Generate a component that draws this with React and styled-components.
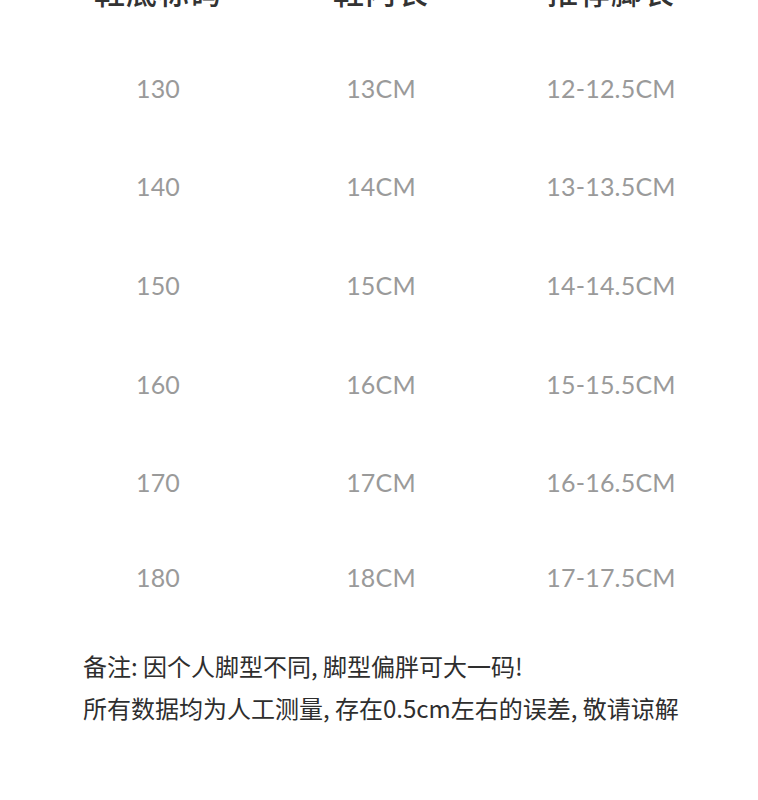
import React from "react";
import styled, { createGlobalStyle } from "styled-components";

const Global = createGlobalStyle`
  html, body { margin: 0; padding: 0; background: #fff; }
  body { width: 758px; height: 800px; overflow: hidden; }
`;

const Page = styled.div`
  width: 758px;
  height: 800px;
  overflow: hidden;
  background: #fff;
  font-family: "Noto Sans CJK SC", "Noto Sans", sans-serif;
`;

const Grid = styled.div`
  display: grid;
  grid-template-columns: 220px 226px 234px;
  padding-left: 48px;
`;

const HeadCell = styled.div`
  height: 60px;
  margin-top: -40px;
  margin-bottom: 19px;
  display: flex;
  align-items: center;
  justify-content: center;
  font-size: 31px;
  font-weight: 500;
  color: #333;
  letter-spacing: 1px;
`;

const Cell = styled.div`
  height: ${(p) => p.$h}px;
  display: flex;
  align-items: center;
  justify-content: center;
  font-family: "Lato", "Noto Sans", sans-serif;
  font-size: 25px;
  color: #9a9a9a;
  letter-spacing: 0.2px;
`;

const Notes = styled.div`
  padding: 21px 0 0 83px;
  font-size: 24px;
  line-height: 42px;
  color: #2e2e2e;
`;

const rows = [
  ["130", "13CM", "12-12.5CM"],
  ["140", "14CM", "13-13.5CM"],
  ["150", "15CM", "14-14.5CM"],
  ["160", "16CM", "15-15.5CM"],
  ["170", "17CM", "16-16.5CM"],
  ["180", "18CM", "17-17.5CM"],
];
const heights = [98, 98, 99, 99, 97, 94];

export default function App() {
  return (
    <Page>
      <Global />
      <Grid>
        <HeadCell>鞋底标码</HeadCell>
        <HeadCell>鞋内长</HeadCell>
        <HeadCell>推荐脚长</HeadCell>
        {rows.map((r, i) =>
          r.map((v, j) => (
            <Cell key={`${i}-${j}`} $h={heights[i]}>
              {v}
            </Cell>
          ))
        )}
      </Grid>
      <Notes>
        <div>备注: 因个人脚型不同, 脚型偏胖可大一码!</div>
        <div>所有数据均为人工测量, 存在0.5cm左右的误差, 敬请谅解</div>
      </Notes>
    </Page>
  );
}
